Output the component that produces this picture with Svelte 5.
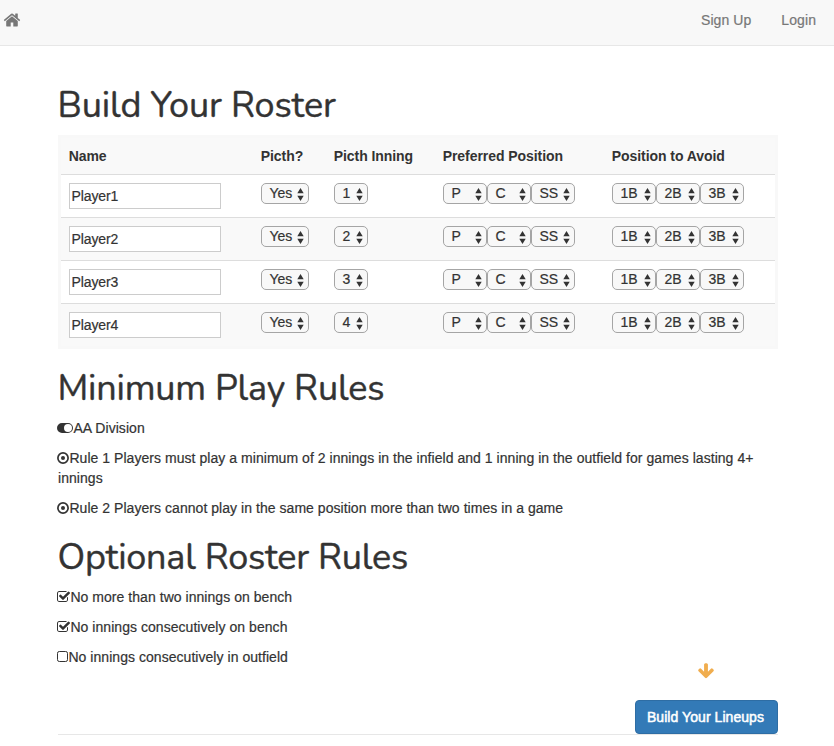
<script>
  const headers = ['Name', 'Picth?', 'Picth Inning', 'Preferred Position', 'Position to Avoid'];
  let players = $state([1, 2, 3, 4].map((n) => ({ name: `Player${n}`, inning: n })));
  const check =
    'M1472 930v318q0 119-84.5 203.5t-203.5 84.5h-832q-119 0-203.5-84.5t-84.5-203.5v-832q0-119 84.5-203.5t203.5-84.5h832q63 0 117 25 15 7 18 23 3 17-9 29l-49 49q-10 10-23 10-3 0-9-2-23-6-45-6h-832q-66 0-113 47t-47 113v832q0 66 47 113t113 47h832q66 0 113-47t47-113v-254q0-13 9-22l64-64q10-10 23-10 6 0 12 3 20 8 20 29zm231-489l-814 814q-24 24-57 24t-57-24l-430-430q-24-24-24-57t24-57l110-110q24-24 57-24t57 24l263 263 647-647q24-24 57-24t57 24l110 110q24 24 24 57t-24 57z';
</script>

{#snippet select(value, kind)}
  <button type="button" class="select {kind}">
    <span>{value}</span>
    <svg width="7" height="13" viewBox="0 0 7 13"><path d="M3.5 0L6.7 5.3H.3zM3.5 13L.3 7.7H6.7z" /></svg>
  </button>
{/snippet}

{#snippet dot()}
  <svg class="dot" width="12" height="12" viewBox="0 0 12 12">
    <circle cx="6" cy="6" r="5.1" fill="none" stroke="#333" stroke-width="1.7" />
    <circle cx="6" cy="6" r="2" />
  </svg>
{/snippet}

<nav>
  <svg class="home" width="18" height="18" viewBox="0 0 1792 1792"><path d="M1472 992v480q0 26-19 45t-45 19h-384v-384h-256v384h-384q-26 0-45-19t-19-45v-480q0-1 .5-3t.5-3l575-474 575 474q1 2 1 6zm223-69l-62 74q-8 9-21 11h-3q-13 0-21-7l-692-577-692 577q-12 8-24 7-13-2-21-11l-62-74q-8-10-7-23.5t11-21.5l719-599q32-26 76-26t76 26l244 204v-195q0-14 9-23t23-9h192q14 0 23 9t9 23v408l219 182q10 8 11 21.5t-7 23.5z" /></svg>
  <div class="links"><span>Sign Up</span><span>Login</span></div>
</nav>

<main>
  <h1 class="build">Build Your Roster</h1>
  <div class="table">
    <div class="row head">
      {#each headers as header}<div>{header}</div>{/each}
    </div>
    {#each players as player}
      <div class="row">
        <div><input type="text" bind:value={player.name} /></div>
        <div>{@render select('Yes', 'yes')}</div>
        <div>{@render select(player.inning, 'inning')}</div>
        <div>{#each ['P', 'C', 'SS'] as position}{@render select(position, 'position')}{/each}</div>
        <div>{#each ['1B', '2B', '3B'] as position}{@render select(position, 'position')}{/each}</div>
      </div>
    {/each}
  </div>

  <h1 class="minimum">Minimum Play Rules</h1>
  <p>
    <svg class="toggle" width="16" height="10" viewBox="0 0 16 10"><path fill-rule="evenodd" d="M5 0H11A5 5 0 0 1 11 10H5A5 5 0 0 1 5 0ZM11 1A4 4 0 0 0 11 9A4 4 0 0 0 11 1Z" /></svg><span>AA Division</span>
  </p>
  <p>{@render dot()}Rule 1 Players must play a minimum of 2 innings in the infield and 1 inning in the outfield for games lasting 4+ innings</p>
  <p>{@render dot()}Rule 2 Players cannot play in the same position more than two times in a game</p>

  <h1 class="optional">Optional Roster Rules</h1>
  <p><svg class="check" width="13" height="11" viewBox="64 128 1664 1408"><path d={check} /></svg>No more than two innings on bench</p>
  <p><svg class="check" width="13" height="11" viewBox="64 128 1664 1408"><path d={check} /></svg>No innings consecutively on bench</p>
  <p class="last"><svg class="box" width="11" height="11" viewBox="0 0 11 11"><rect x=".5" y=".5" width="10" height="10" rx="1.8" fill="none" stroke="#333" /></svg>No innings consecutively in outfield</p>

  <footer>
    <div class="action">
      <svg class="arrow" width="18" height="18" viewBox="0 0 1792 1792"><path d="M1675 832q0 53-37 90l-651 652q-39 37-91 37-53 0-90-37l-651-652q-38-36-38-90 0-53 38-91l74-75q39-37 91-37 53 0 90 37l294 294v-704q0-52 38-90t90-38h128q52 0 90 38t38 90v704l294-294q37-37 90-37 52 0 91 37l75 75q37 39 37 91z" /></svg>
      <button type="button" class="primary">Build Your Lineups</button>
    </div>
  </footer>
</main>

<style>
  :global(body) {
    background: #fff;
    overflow: hidden;
  }
  :global(#app) {
    font: 14px/20px 'Liberation Sans', Arial, sans-serif;
    color: #333;
  }
  nav {
    box-sizing: border-box;
    height: 46px;
    padding: 0 18px 6px 3px;
    display: flex;
    align-items: center;
    justify-content: space-between;
    background: #f8f8f8;
    border-bottom: 1px solid #e7e7e7;
    color: #777;
  }
  .home {
    fill: #777;
  }
  .links {
    display: flex;
    gap: 30px;
    letter-spacing: 0.08px;
    -webkit-text-stroke: 0.2px;
  }
  main {
    margin: 0 56px 0 58px;
  }
  h1 {
    margin: 0;
    font: 400 36px/40px Nunito, Lato, sans-serif;
    letter-spacing: -0.2px;
    text-indent: -0.5px;
    white-space: nowrap;
    -webkit-text-stroke: 0.4px #333;
  }
  .build {
    padding-top: 40px;
    margin-bottom: 9px;
    letter-spacing: -0.1px;
  }
  .minimum,
  .optional {
    margin: 20px 0 9px;
  }
  .table {
    box-sizing: border-box;
    height: 214px;
    border: 3px solid #f8f8f8;
    background: #f9f9f9;
  }
  .row {
    box-sizing: border-box;
    height: 43px;
    display: grid;
    grid-template-columns: 192px 73px 109px 169px 171px;
    border-top: 1px solid #ddd;
    background: #fff;
  }
  .row > div {
    display: flex;
    align-items: flex-start;
    padding: 8px 0 0 8px;
  }
  .row:nth-child(odd) {
    background: #f9f9f9;
  }
  .head {
    height: 36px;
    border: 0;
    font-weight: 700;
    letter-spacing: -0.06px;
    text-indent: -0.3px;
  }
  input {
    box-sizing: border-box;
    width: 152px;
    height: 26px;
    margin: 0;
    padding: 1px 1.5px;
    border: 1px solid #ccc;
    background: #fff;
    font: inherit;
    color: inherit;
    letter-spacing: -0.1px;
    -webkit-text-stroke: 0.2px;
  }
  .select {
    box-sizing: border-box;
    display: flex;
    align-items: center;
    justify-content: space-between;
    height: 21px;
    width: 44px;
    padding: 0 4px 0 7.5px;
    border: 1px solid #a5a5a5;
    border-radius: 5px;
    background: #f8f8f8;
    font: inherit;
    line-height: 19px;
    color: inherit;
    -webkit-text-stroke: 0.2px;
  }
  .select svg {
    flex: none;
    margin-top: 1px;
    fill: #333;
  }
  .yes {
    width: 48px;
  }
  .inning {
    width: 34px;
  }
  p {
    margin: 0 0 10px;
    letter-spacing: 0.045px;
    -webkit-text-stroke: 0.2px;
  }
  p svg {
    margin-left: -0.6px;
    fill: #333;
    -webkit-text-stroke: 0;
  }
  .toggle {
    vertical-align: 0;
  }
  .dot {
    vertical-align: -1px;
  }
  .check,
  .box {
    vertical-align: 0;
  }
  footer {
    display: flex;
    justify-content: flex-end;
    border-bottom: 1px solid #e7e7e7;
  }
  .action {
    display: flex;
    flex-direction: column;
    align-items: center;
    gap: 20px;
    margin-top: -15px;
  }
  .arrow {
    margin-right: 1px;
    fill: #f0ad4e;
  }
  .primary {
    box-sizing: border-box;
    width: 143px;
    height: 34px;
    padding: 0 2px 0 0;
    border: 1px solid #2e6da4;
    border-radius: 4px;
    background: #337ab7;
    color: #fff;
    font: inherit;
    letter-spacing: 0.06px;
    -webkit-text-stroke: 0.5px #fff;
  }
</style>
